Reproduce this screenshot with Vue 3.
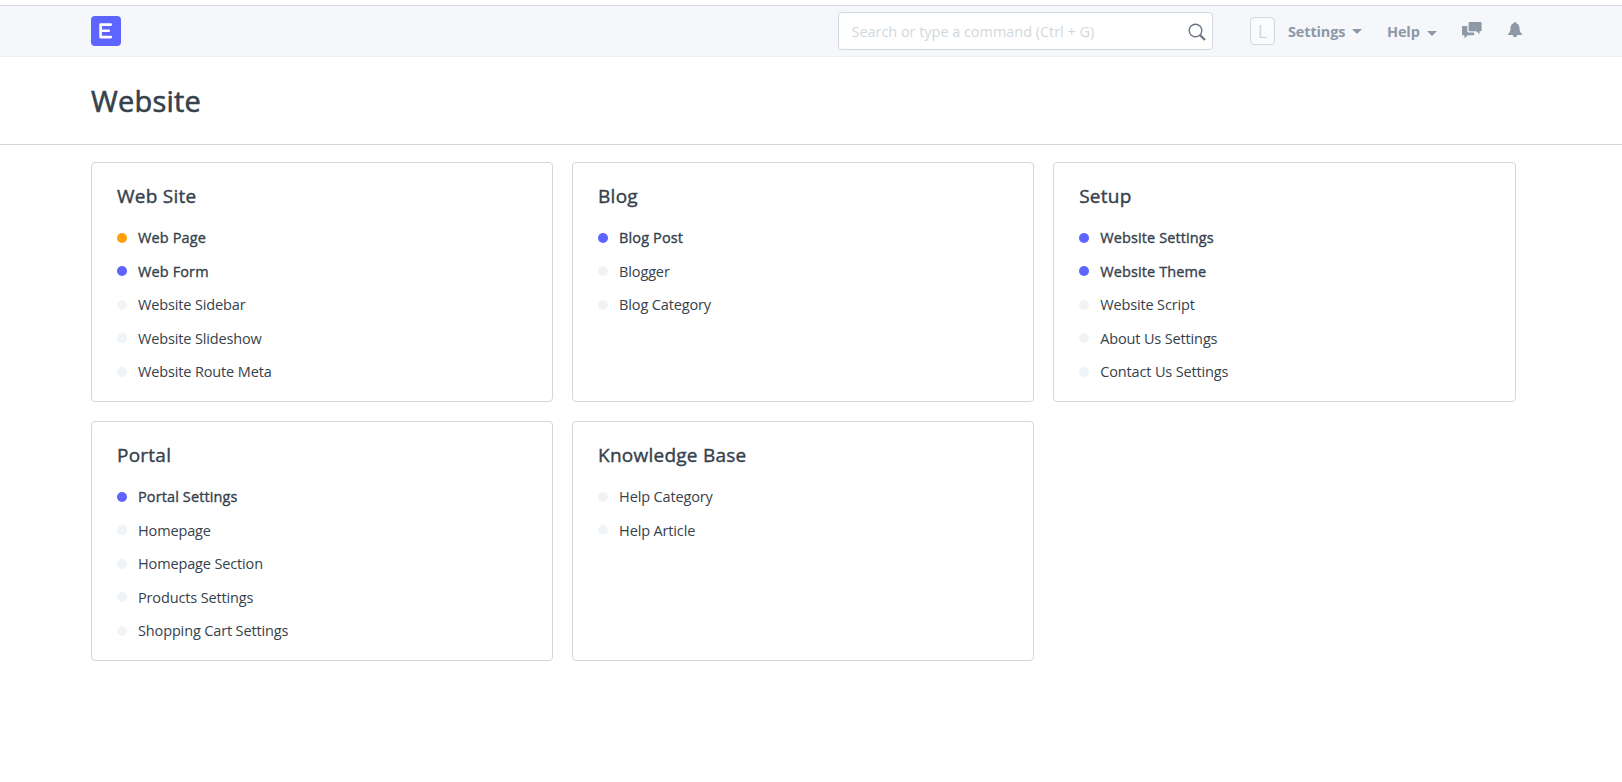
<script setup>
const sections = [
  { title: 'Web Site', key: 'site', items: [['Web Page', 'orange'], ['Web Form', 'blue'], ['Website Sidebar'], ['Website Slideshow'], ['Website Route Meta']] },
  { title: 'Blog', key: 'blog', items: [['Blog Post', 'blue'], ['Blogger'], ['Blog Category']] },
  { title: 'Setup', key: 'setup', items: [['Website Settings', 'blue'], ['Website Theme', 'blue'], ['Website Script'], ['About Us Settings'], ['Contact Us Settings']] },
  { title: 'Portal', key: 'portal', items: [['Portal Settings', 'blue'], ['Homepage'], ['Homepage Section'], ['Products Settings'], ['Shopping Cart Settings']] },
  { title: 'Knowledge Base', key: 'kb', items: [['Help Category'], ['Help Article']] }
]
</script>

<template>
  <div class="page">
    <header class="navbar">
      <svg class="logo" width="30" height="30" viewBox="0 0 30 30">
        <rect width="30" height="30" rx="4" fill="#5e64ff" />
        <path d="M19.8 8.6H9.6V21.1H19.8M9.6 14.8H17.8" fill="none" stroke="#fff" stroke-width="2.6" stroke-linecap="round" stroke-linejoin="round" />
      </svg>
      <div class="search">
        <span class="placeholder">Search or type a command (Ctrl + G)</span>
        <svg width="18" height="18" viewBox="0 0 18 18" fill="none" stroke="#6c7680">
          <circle cx="7.5" cy="7.5" r="6.3" stroke-width="1.4" />
          <path d="M11.9 11.9L17 17" stroke-width="2.2" />
        </svg>
      </div>
      <div class="avatar">L</div>
      <div class="menu settings">Settings</div>
      <svg class="caret c1" width="10" height="5" viewBox="0 0 10 5"><path d="M0 0H10L5 5Z" fill="#8d99a6" /></svg>
      <div class="menu help">Help</div>
      <svg class="caret c2" width="10" height="5" viewBox="0 0 10 5"><path d="M0 0H10L5 5Z" fill="#8d99a6" /></svg>
      <svg class="chat" width="20" height="17" viewBox="0 0 20 17" fill="#8d99a6">
        <path d="M7.6 0H18.6Q19.6 0 19.6 1V8.3Q19.6 9.3 18.6 9.3H17.6V12.3L14.4 9.3H7.6Q6.6 9.3 6.6 8.3V1Q6.6 0 7.6 0Z" />
        <path d="M1 4H5.3V9.2Q5.3 10.6 6.7 10.6H12.2V12.3Q12.2 13.3 11.2 13.3H5.6L2.5 16.4V13.3H1Q0 13.3 0 12.3V5Q0 4 1 4Z" />
      </svg>
      <svg class="bell" width="14" height="16" viewBox="0 0 14 16" fill="#8d99a6">
        <path d="M7 0Q8.2 0 8.3 1.3C10.8 2 11.4 4 11.5 6.2C11.6 9.2 12.4 10.6 14 12V13H0V12C1.6 10.6 2.4 9.2 2.5 6.2C2.6 4 3.2 2 5.7 1.3Q5.8 0 7 0ZM4.7 13H9.3Q9 15.3 7 15.3Q5 15.3 4.7 13Z" />
      </svg>
    </header>
    <div class="page-head"><h1>Website</h1></div>
    <main class="grid">
      <section v-for="s in sections" :key="s.key" class="card">
        <h2>{{ s.title }}</h2>
        <ul>
          <li v-for="[name, tone] in s.items" :key="name" :class="{ strong: tone }">
            <i class="dot" :class="tone"></i><span>{{ name }}</span>
          </li>
        </ul>
      </section>
    </main>
  </div>
</template>

<style>
body { background: #fff; }
</style>

<style scoped>
.page { height: 782px; box-sizing: border-box; padding-top: 5px; overflow: hidden; font-family: "Open Sans", "Noto Sans", sans-serif; color: #36414c; font-size: 14.5px; }
.navbar { box-sizing: border-box; height: 52px; display: flex; align-items: flex-start; background: #f5f7fb; border-top: 1px solid #d4d8de; border-bottom: 1px solid #ebeff2; padding-left: 91px; }
.navbar > * { flex: none; }
.logo { margin-top: 10px; }
.search { box-sizing: border-box; width: 375px; height: 38px; margin: 6px 0 0 717px; border: 1px solid #d1d8dd; border-radius: 4px; background: #fff; display: flex; align-items: center; justify-content: space-between; padding: 0 6px 0 12.5px; }
.search svg { margin-top: 2px; }
.placeholder { color: #d1d8dd; letter-spacing: -0.04px; white-space: nowrap; }
.avatar { box-sizing: border-box; width: 25px; height: 28px; margin: 11px 0 0 37px; border: 1px solid #d1d8dd; border-radius: 4px; background: #fafbfc; color: #d1d8dd; font-size: 18px; line-height: 27px; text-align: center; }
.menu { color: #8d99a6; font-weight: 700; line-height: 20px; margin-top: 16px; white-space: nowrap; letter-spacing: -0.15px; }
.settings { margin-left: 13px; width: 64px; }
.help { margin-left: 25px; width: 40px; }
.c1 { margin-top: 23px; }
.c2 { margin-top: 25px; }
.chat { margin: 16px 0 0 24.5px; }
.bell { margin: 16px 0 0 26px; }
.page-head { box-sizing: border-box; height: 88px; border-bottom: 1px solid #d1d8dd; padding: 24px 0 0 91px; }
h1 { margin: 0; font-size: 29px; line-height: 40px; font-weight: 500; letter-spacing: 0.2px; -webkit-text-stroke: 0.6px currentColor; }
.grid { display: grid; width: 1424.5px; grid-template-columns: repeat(3, 1fr); grid-auto-rows: 239.9px; gap: 19px 18.75px; margin: 17px 0 0 91px; }
.card { box-sizing: border-box; border: 1px solid #d1d8dd; border-radius: 4px; padding: 19px 25px 0; }
h2 { margin: 0; font-size: 19px; line-height: 28px; font-weight: 500; letter-spacing: 0.24px; -webkit-text-stroke: 0.4px currentColor; }
ul { margin: 11px 0 0; padding: 0; list-style: none; }
li { height: 33.5px; display: flex; align-items: center; letter-spacing: -0.14px; white-space: nowrap; }
.strong { font-weight: 500; letter-spacing: 0.12px; -webkit-text-stroke: 0.35px currentColor; }
.dot { width: 10px; height: 10px; border-radius: 50%; background: #f0f4f7; margin-right: 11px; }
.dot.blue { background: #5e64ff; }
.dot.orange { background: #ffa00a; }
</style>
